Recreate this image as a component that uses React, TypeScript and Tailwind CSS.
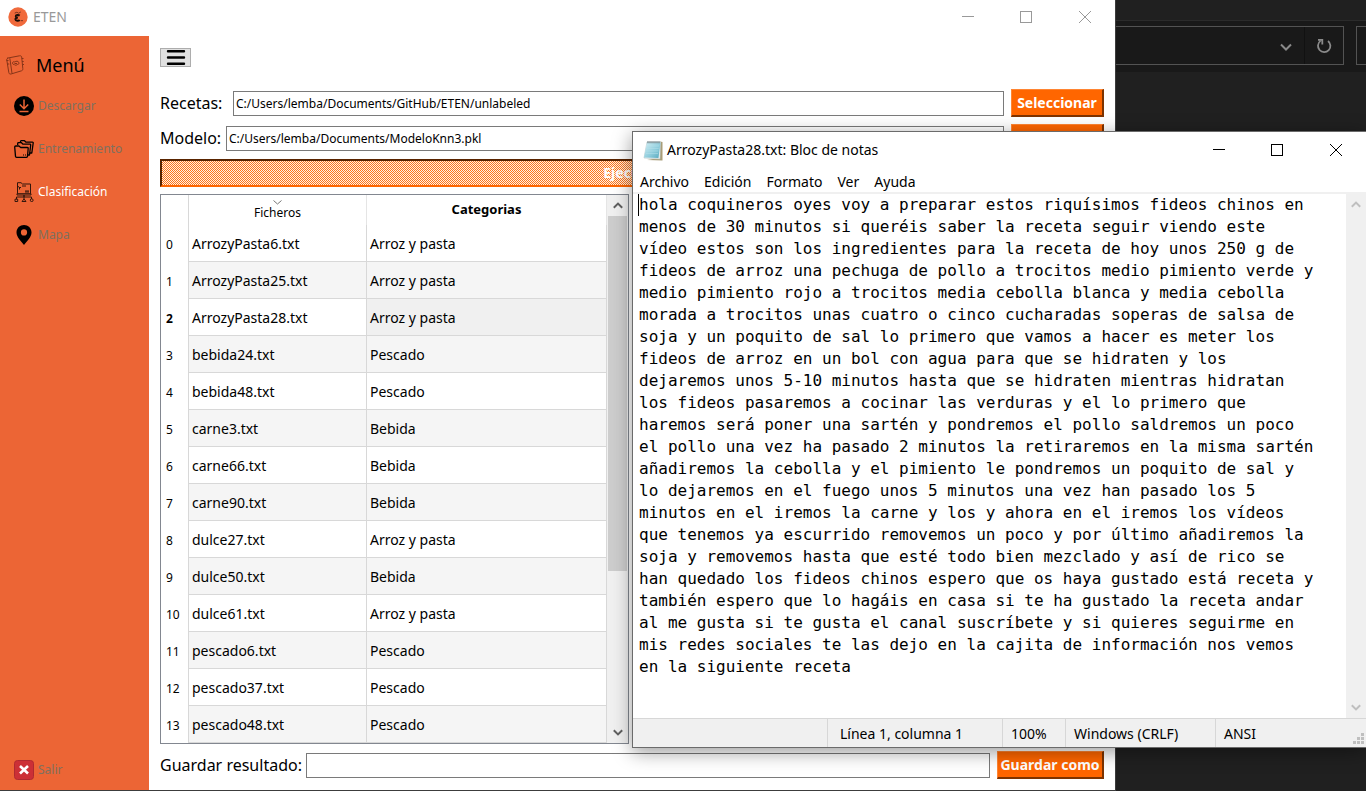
import { ReactNode } from "react";

const uiFont = "font-['Noto_Sans','Open_Sans',sans-serif]";

const rows: [string, string][] = [
  ["ArrozyPasta6.txt", "Arroz y pasta"],
  ["ArrozyPasta25.txt", "Arroz y pasta"],
  ["ArrozyPasta28.txt", "Arroz y pasta"],
  ["bebida24.txt", "Pescado"],
  ["bebida48.txt", "Pescado"],
  ["carne3.txt", "Bebida"],
  ["carne66.txt", "Bebida"],
  ["carne90.txt", "Bebida"],
  ["dulce27.txt", "Arroz y pasta"],
  ["dulce50.txt", "Bebida"],
  ["dulce61.txt", "Arroz y pasta"],
  ["pescado6.txt", "Pescado"],
  ["pescado37.txt", "Pescado"],
  ["pescado48.txt", "Pescado"],
];

const noteText = `hola coquineros oyes voy a preparar estos riquísimos fideos chinos en
menos de 30 minutos si queréis saber la receta seguir viendo este
vídeo estos son los ingredientes para la receta de hoy unos 250 g de
fideos de arroz una pechuga de pollo a trocitos medio pimiento verde y
medio pimiento rojo a trocitos media cebolla blanca y media cebolla
morada a trocitos unas cuatro o cinco cucharadas soperas de salsa de
soja y un poquito de sal lo primero que vamos a hacer es meter los
fideos de arroz en un bol con agua para que se hidraten y los
dejaremos unos 5-10 minutos hasta que se hidraten mientras hidratan
los fideos pasaremos a cocinar las verduras y el lo primero que
haremos será poner una sartén y pondremos el pollo saldremos un poco
el pollo una vez ha pasado 2 minutos la retiraremos en la misma sartén
añadiremos la cebolla y el pimiento le pondremos un poquito de sal y
lo dejaremos en el fuego unos 5 minutos una vez han pasado los 5
minutos en el iremos la carne y los y ahora en el iremos los vídeos
que tenemos ya escurrido removemos un poco y por último añadiremos la
soja y removemos hasta que esté todo bien mezclado y así de rico se
han quedado los fideos chinos espero que os haya gustado está receta y
también espero que lo hagáis en casa si te ha gustado la receta andar
al me gusta si te gusta el canal suscríbete y si quieres seguirme en
mis redes sociales te las dejo en la cajita de información nos vemos
en la siguiente receta`;

function MinimizeIcon() {
  return (
    <svg width="12" height="12" viewBox="0 0 12 12" stroke="currentColor" fill="none" shapeRendering="crispEdges">
      <path d="M0 5.5H12" />
    </svg>
  );
}

function MaximizeIcon() {
  return (
    <svg width="12" height="12" viewBox="0 0 12 12" stroke="currentColor" fill="none" shapeRendering="crispEdges">
      <rect x="0.5" y="0.5" width="11" height="11" />
    </svg>
  );
}

function CloseIcon() {
  return (
    <svg width="12" height="12" viewBox="0 0 12 12" stroke="currentColor" fill="none">
      <path d="M0 0L12 12M12 0L0 12" />
    </svg>
  );
}

function WindowButtons() {
  return (
    <div className="flex items-center">
      <button type="button" aria-label="Minimizar" className="flex h-8 w-[58px] items-center justify-center">
        <MinimizeIcon />
      </button>
      <button type="button" aria-label="Maximizar" className="flex h-8 w-[58px] items-center justify-center">
        <MaximizeIcon />
      </button>
      <button type="button" aria-label="Cerrar" className="flex h-8 w-[60px] items-center justify-center">
        <CloseIcon />
      </button>
    </div>
  );
}

function LogoIcon() {
  return (
    <svg width="20" height="20" viewBox="0 0 18 18" className="shrink-0">
      <circle cx="9" cy="9" r="8.700" fill="#f06a3c" />
      <path d="M10.500 7.800C9.200 6.900 6.900 7.100 7 8.500C7.100 9.300 8 9.500 8.900 9.500C7.600 9.600 6.600 10 6.700 11.200C6.900 12.700 9.500 12.800 10.500 11.700" fill="none" stroke="#1c0e08" strokeWidth="1.800" />
      <path d="M6 5.500L8 4.700L9.500 5.600L11.500 4.500M11.500 12.300H13.500" fill="none" stroke="#7a3520" strokeWidth=".9" />
    </svg>
  );
}

function BookIcon() {
  return (
    <svg width="18" height="20" viewBox="0 0 18 20" fill="none" stroke="#873519" strokeWidth="1">
      <path d="M1 3.200L13.500 .8C15 .6 15.500 1.200 15.700 2L16.800 13.500C16.900 15 16.500 15.500 15.500 15.800L5 19C3.500 19.300 3 18.500 2.800 17.500L.8 5C.6 4 1 3.500 2 3.300" />
      <path d="M3.800 3.200L6 18.300M15.800 3.500H17.500M16 6.500H17.700M16.300 9.500H18M.5 5.500H2.500M1.300 9H3.300" />
      <path d="M6.500 8.500C6 7 8 6.300 8.800 7C10 5.800 12.500 6 12.700 7.500C13.500 8.500 12.500 9.500 11.300 9.500C10.500 10.500 8.500 10.500 8 9.300C7 9.500 6.700 9 6.500 8.500ZM8.500 8.500H11" />
    </svg>
  );
}

function DownloadIcon() {
  return (
    <svg width="20" height="20" viewBox="0 0 20 20">
      <circle cx="10" cy="10" r="10" fill="#000" />
      <path d="M10 3.500V12M5.800 8.500L10 12.700L14.200 8.500M5.500 15.500H14.500" fill="none" stroke="#ec6535" strokeWidth="1.500" />
    </svg>
  );
}

function FoldersIcon() {
  return (
    <svg width="20" height="18" viewBox="0 0 20 18" fill="#ec6535" stroke="#000" strokeWidth="1.300" strokeLinejoin="round">
      <path d="M6.500 2.500V1.500Q6.500.7 7.300.7H10.500L12 2.200H18.500Q19.300 2.200 19.200 3L17.800 13H15" />
      <path d="M3.700 5V3.500Q3.700 2.700 4.500 2.700H7.500L9 4.200H16Q16.700 4.200 16.700 5L15.500 15H13" />
      <path d="M2.500 17.300Q1.600 17.300 1.500 16.400L.7 7Q.7 6 1.700 6H5L6.700 7.500H13.500Q14.300 7.500 14.200 8.300L13.500 16.400Q13.400 17.300 12.500 17.300Z" />
      <path d="M9 15H10M11 15H12" strokeWidth="1" />
    </svg>
  );
}

function ClassifyIcon() {
  return (
    <svg width="20" height="20" viewBox="0 0 20 20" fill="none" stroke="#32160c" strokeWidth="1">
      <path d="M3.500 11.500V.7H7L8.500 2H16.500V11.500" />
      <path d="M3.500 3.500L5 5.500H7M8 4H12M5.500 7.500V5.500M11 9H15M11 10H15" />
      <path d="M3 11.700H17V13H3ZM10 13V17M2.500 17V15H17.500V17M10 13V15" />
      <path d="M1 17.200H3.700V19.500H1ZM10 17L12 19.500H8Z" />
      <circle cx="17.700" cy="18.200" r="1.400" />
    </svg>
  );
}

function PinIcon() {
  return (
    <svg width="20" height="20" viewBox="0 0 20 20">
      <path fillRule="evenodd" fill="#000" d="M10 0C5.800 0 2.500 3.200 2.500 7.400C2.500 12 7 16 10 20C13 16 17.500 12 17.500 7.400C17.500 3.200 14.200 0 10 0ZM10 4.300A3.100 3.100 0 1 1 10 10.500A3.100 3.100 0 1 1 10 4.300Z" />
    </svg>
  );
}

function ExitIcon() {
  return (
    <svg width="20" height="20" viewBox="0 0 20 20">
      <rect x=".5" y=".5" width="19" height="19" rx="3" fill="#cc3036" stroke="#b02a30" />
      <path d="M6 6L14 13.500M14 6L6 13.500" stroke="#fff" strokeWidth="2.600" />
    </svg>
  );
}

function NotepadIcon() {
  return (
    <svg width="20" height="21" viewBox="0 0 20 21">
      <defs>
        <linearGradient id="sheet" x1="0" y1="0" x2="1" y2="1">
          <stop offset="0" stopColor="#d5f0f6" />
          <stop offset=".6" stopColor="#8ccbdb" />
          <stop offset="1" stopColor="#56a8bd" />
        </linearGradient>
      </defs>
      <path d="M17 1.500L19.500 2V20.500L4 20L16 18Z" fill="#a99d78" />
      <path d="M1 18L4 2H17.500L17 19Z" fill="#f2f5f2" stroke="#b3c5c7" strokeWidth=".6" />
      <path d="M1 17.500L4 2.500H17.500L15.500 18Z" fill="url(#sheet)" />
      <path d="M4.500 2.200H17" stroke="#52646a" strokeWidth="2" strokeDasharray="1 1" />
      <path d="M4.500 6H16M4 8.500H15.700M3.500 11H15.300M3 13.500H15" stroke="#b7e0ea" strokeWidth=".5" />
    </svg>
  );
}

function Chevron({ up }: { up?: boolean }) {
  return (
    <svg width="10" height="7" viewBox="0 0 10 7" fill="none" stroke="currentColor" strokeWidth="2">
      <path d={up ? "M.8 5.800L5 1.600L9.200 5.800" : "M.8 1.200L5 5.400L9.200 1.200"} />
    </svg>
  );
}

function MenuItem({ icon, label, active }: { icon: ReactNode; label: string; active?: boolean }) {
  return (
    <a
      href="#"
      aria-current={active ? "page" : undefined}
      className={`flex h-[43px] items-center gap-1 pl-3.5 text-[12px] ${active ? "text-white" : "text-[#80705f]"}`}
    >
      <span className="flex w-5 justify-center">{icon}</span>
      {label}
    </a>
  );
}

function OrangeButton({ children, className }: { children: ReactNode; className: string }) {
  return (
    <button
      type="button"
      className={`h-7 shrink-0 border-t border-l border-r-2 border-b-2 border-t-[#ff8533] border-r-[#7e3300] border-b-[#7e3300] border-l-[#ff8533] bg-[#ff6600] text-sm font-bold whitespace-nowrap text-white ${className}`}
    >
      {children}
    </button>
  );
}

type PathRowProps = {
  id: string;
  label: string;
  labelWidth: string;
  value: string;
  action: string;
  buttonWidth: string;
};

function PathRow({ id, label, labelWidth, value, action, buttonWidth }: PathRowProps) {
  return (
    <div className="flex items-center gap-[7px]">
      <label htmlFor={id} className={`shrink-0 text-base leading-7 whitespace-nowrap ${labelWidth}`}>
        {label}
      </label>
      <input
        id={id}
        type="text"
        defaultValue={value}
        className="h-[25px] min-w-0 flex-1 border border-[#7a7a7a] bg-white px-0.5 text-[12px] outline-none"
      />
      <OrangeButton className={buttonWidth}>{action}</OrangeButton>
    </div>
  );
}

function ResultsTable() {
  return (
    <div className="flex min-h-0 w-[469px] flex-1 overflow-hidden border border-[#828790] bg-white">
      <div className="min-w-0 flex-1 overflow-hidden">
        <table className="w-full table-fixed border-separate border-spacing-0 text-left">
          <colgroup>
            <col className="w-7" />
            <col className="w-[178px]" />
            <col />
          </colgroup>
          <thead>
            <tr className="h-[30px] text-center text-[12px]">
              <td className="border-r border-[#d8d8d8]" />
              <th scope="col" className="border-r border-[#e5e5e5] p-0 font-normal">
                <div className="flex flex-col items-center">
                  <svg width="9" height="5" viewBox="0 0 9 5" fill="none" stroke="#777">
                    <path d="M.5.5L4.500 4L8.500.5" />
                  </svg>
                  <span className="leading-4">Ficheros</span>
                </div>
              </th>
              <th scope="col" className="border-r border-[#e5e5e5] p-0 text-[13px] font-bold">
                Categorias
              </th>
            </tr>
          </thead>
          <tbody>
            {rows.map(([file, category], i) => (
              <tr key={file} className={`h-[37px] text-sm ${i % 2 ? "bg-[#f5f5f5]" : "bg-white"}`}>
                <th
                  scope="row"
                  className={`border-r border-[#d8d8d8] bg-white p-0 pt-0.5 pl-[5px] text-[12px] ${i === 2 ? "font-bold" : "font-normal"}`}
                >
                  {i}
                </th>
                <td className="border-r border-b border-[#d8d8d8] p-0 pt-0.5 pl-[3px]">{file}</td>
                <td className={`border-r border-b border-[#d8d8d8] p-0 pt-0.5 pl-[3px] ${i === 2 ? "bg-[#f0f0f0]" : ""}`}>{category}</td>
              </tr>
            ))}
          </tbody>
        </table>
      </div>
      <div className="flex w-[21px] flex-col items-center bg-[#f0f0f0] text-[#606060]">
        <div className="flex h-[21px] items-center">
          <Chevron up />
        </div>
        <div className="h-[355px] w-[19px] bg-[#cdcdcd]" />
        <div className="mt-auto flex h-[21px] items-center">
          <Chevron />
        </div>
      </div>
    </div>
  );
}

function EtenWindow() {
  return (
    <section className="absolute top-0 right-[250px] bottom-0 left-0 flex flex-col border-r border-b border-[#3c3c3c] bg-white text-black">
      <header className="flex h-9 shrink-0 items-center justify-between pb-0.5 text-[#999]">
        <div className="flex items-center gap-[5px] pl-2 text-sm">
          <LogoIcon />
          <span>ETEN</span>
        </div>
        <WindowButtons />
      </header>
      <div className="flex min-h-0 flex-1">
        <nav className="flex w-[149px] shrink-0 flex-col bg-[#ec6535]">
          <h1 className="flex h-12 items-center gap-3 pt-2.5 pl-1.5 text-lg">
            <BookIcon />
            Menú
          </h1>
          <MenuItem icon={<DownloadIcon />} label="Descargar" />
          <MenuItem icon={<FoldersIcon />} label="Entrenamiento" />
          <MenuItem active icon={<ClassifyIcon />} label="Clasificación" />
          <MenuItem icon={<PinIcon />} label="Mapa" />
          <div className="mt-auto flex h-10 items-center">
            <MenuItem icon={<ExitIcon />} label="Salir" />
          </div>
        </nav>
        <main className="flex min-w-0 flex-1 flex-col gap-[7px] p-[11px] pt-3">
          <button
            type="button"
            aria-label="Menú"
            className="mb-[15px] flex h-[19px] w-[31px] shrink-0 items-center justify-center border border-[#adadad] bg-[#e1e1e1]"
          >
            <svg width="20" height="17" viewBox="0 0 20 17" stroke="#000" strokeWidth="2.400" strokeLinecap="round">
              <path d="M2 2.300H18M2 8.500H18M2 14.700H18" />
            </svg>
          </button>
          <PathRow
            id="recetas"
            label="Recetas:"
            labelWidth="w-[66px]"
            value="C:/Users/lemba/Documents/GitHub/ETEN/unlabeled"
            action="Seleccionar"
            buttonWidth="w-[93px]"
          />
          <PathRow
            id="modelo"
            label="Modelo:"
            labelWidth="w-[59px]"
            value="C:/Users/lemba/Documents/ModeloKnn3.pkl"
            action="Seleccionar"
            buttonWidth="w-[93px]"
          />
          <button
            type="button"
            className="h-7 shrink-0 border-2 border-t-[#592400] border-r-[#ff6600] border-b-[#ff6600] border-l-[#592400] bg-[repeating-conic-gradient(#ff7519_0%_25%,#fff0e5_0%_50%)] bg-[length:2px_2px] text-sm font-bold text-white"
          >
            Ejecutar
          </button>
          <ResultsTable />
          <PathRow
            id="guardar"
            label="Guardar resultado:"
            labelWidth="w-[139px]"
            value=""
            action="Guardar como"
            buttonWidth="w-[107px]"
          />
        </main>
      </div>
    </section>
  );
}

function NotepadWindow() {
  return (
    <section className="absolute top-[131px] right-0 left-[632px] flex flex-col border border-r-0 border-[#6b6b6b] bg-white text-black shadow-[0_4px_18px_rgba(0,0,0,0.4)]">
      <header className="flex h-[38px] items-center justify-between pb-0.5">
        <div className="flex items-center gap-1 pl-2.5 text-sm">
          <NotepadIcon />
          <span>ArrozyPasta28.txt: Bloc de notas</span>
        </div>
        <WindowButtons />
      </header>
      <nav className="flex h-6 items-center gap-[15px] border-b-2 border-[#f0f0f0] pt-0.5 pl-[7px] text-sm">
        <button type="button">Archivo</button>
        <button type="button">Edición</button>
        <button type="button">Formato</button>
        <button type="button">Ver</button>
        <button type="button">Ayuda</button>
      </nav>
      <div className="flex">
        <div className="flex min-w-0 flex-1 pl-[5px]">
          <span className="h-[22px] w-px shrink-0 bg-black" />
          <textarea
            aria-label="Contenido de ArrozyPasta28.txt"
            rows={24}
            spellCheck={false}
            defaultValue={noteText}
            className="h-[524px] min-w-0 flex-1 resize-none overflow-hidden bg-white font-['DejaVu_Sans_Mono','Liberation_Mono',monospace] text-base leading-[22px] whitespace-pre outline-none"
          />
        </div>
        <div className="flex w-5 flex-col items-center justify-between bg-[#f0f0f0] py-[7px] text-[#bfbfbf]">
          <Chevron up />
          <Chevron />
        </div>
      </div>
      <footer className="flex h-[29px] items-stretch border-t border-[#d7d7d7] bg-[#f0f0f0] text-sm leading-[30px]">
        <span className="flex-1" />
        <span className="w-[175px] border-l border-[#d7d7d7] pl-3">Línea 1, columna 1</span>
        <span className="w-[63px] border-l border-[#d7d7d7] pl-2">100%</span>
        <span className="w-[150px] border-l border-[#d7d7d7] pl-2">Windows (CRLF)</span>
        <span className="flex w-[151px] justify-between border-l border-[#d7d7d7] pl-2">
          ANSI
          <svg width="13" height="14" viewBox="0 0 13 14" fill="#bfbfbf" shapeRendering="crispEdges" className="self-end">
            <path d="M8 0h3v3h-3zM8 4h3v3h-3zM4 4h3v3h-3zM8 8h3v3h-3zM4 8h3v3h-3zM0 8h3v3h-3z" />
          </svg>
        </span>
      </footer>
    </section>
  );
}

function BackgroundBrowser() {
  return (
    <div className="flex flex-col">
      <div className="h-[21px] border-b border-[#2b2b2b]" />
      <div className="flex h-[51px] gap-3 bg-[#191919] pt-[5px] text-[#8a8a8a]">
        <div className="flex h-[39px] flex-1 items-center justify-end border border-[#535353]">
          <button type="button" aria-label="Historial" className="flex h-full w-9 items-center justify-center pt-0.5">
            <svg width="12" height="8" viewBox="0 0 12 8" fill="none" stroke="currentColor" strokeWidth="2">
              <path d="M1 1.500L6 6.500L11 1.500" />
            </svg>
          </button>
          <button type="button" aria-label="Actualizar" className="flex h-full w-[39px] items-center justify-center border-l border-[#111]">
            <svg width="16" height="16" viewBox="0 0 16 16" fill="none" stroke="currentColor" strokeWidth="1.800">
              <path d="M12 3A6.200 6.200 0 1 1 4.500 2.900M2 1.900H6.300V6.500" />
            </svg>
          </button>
        </div>
        <div className="h-[39px] w-2.5 border border-r-0 border-[#535353]" />
      </div>
    </div>
  );
}

export default function App() {
  return (
    <div className={`relative h-screen overflow-hidden bg-[#202020] ${uiFont}`}>
      <BackgroundBrowser />
      <EtenWindow />
      <NotepadWindow />
    </div>
  );
}
